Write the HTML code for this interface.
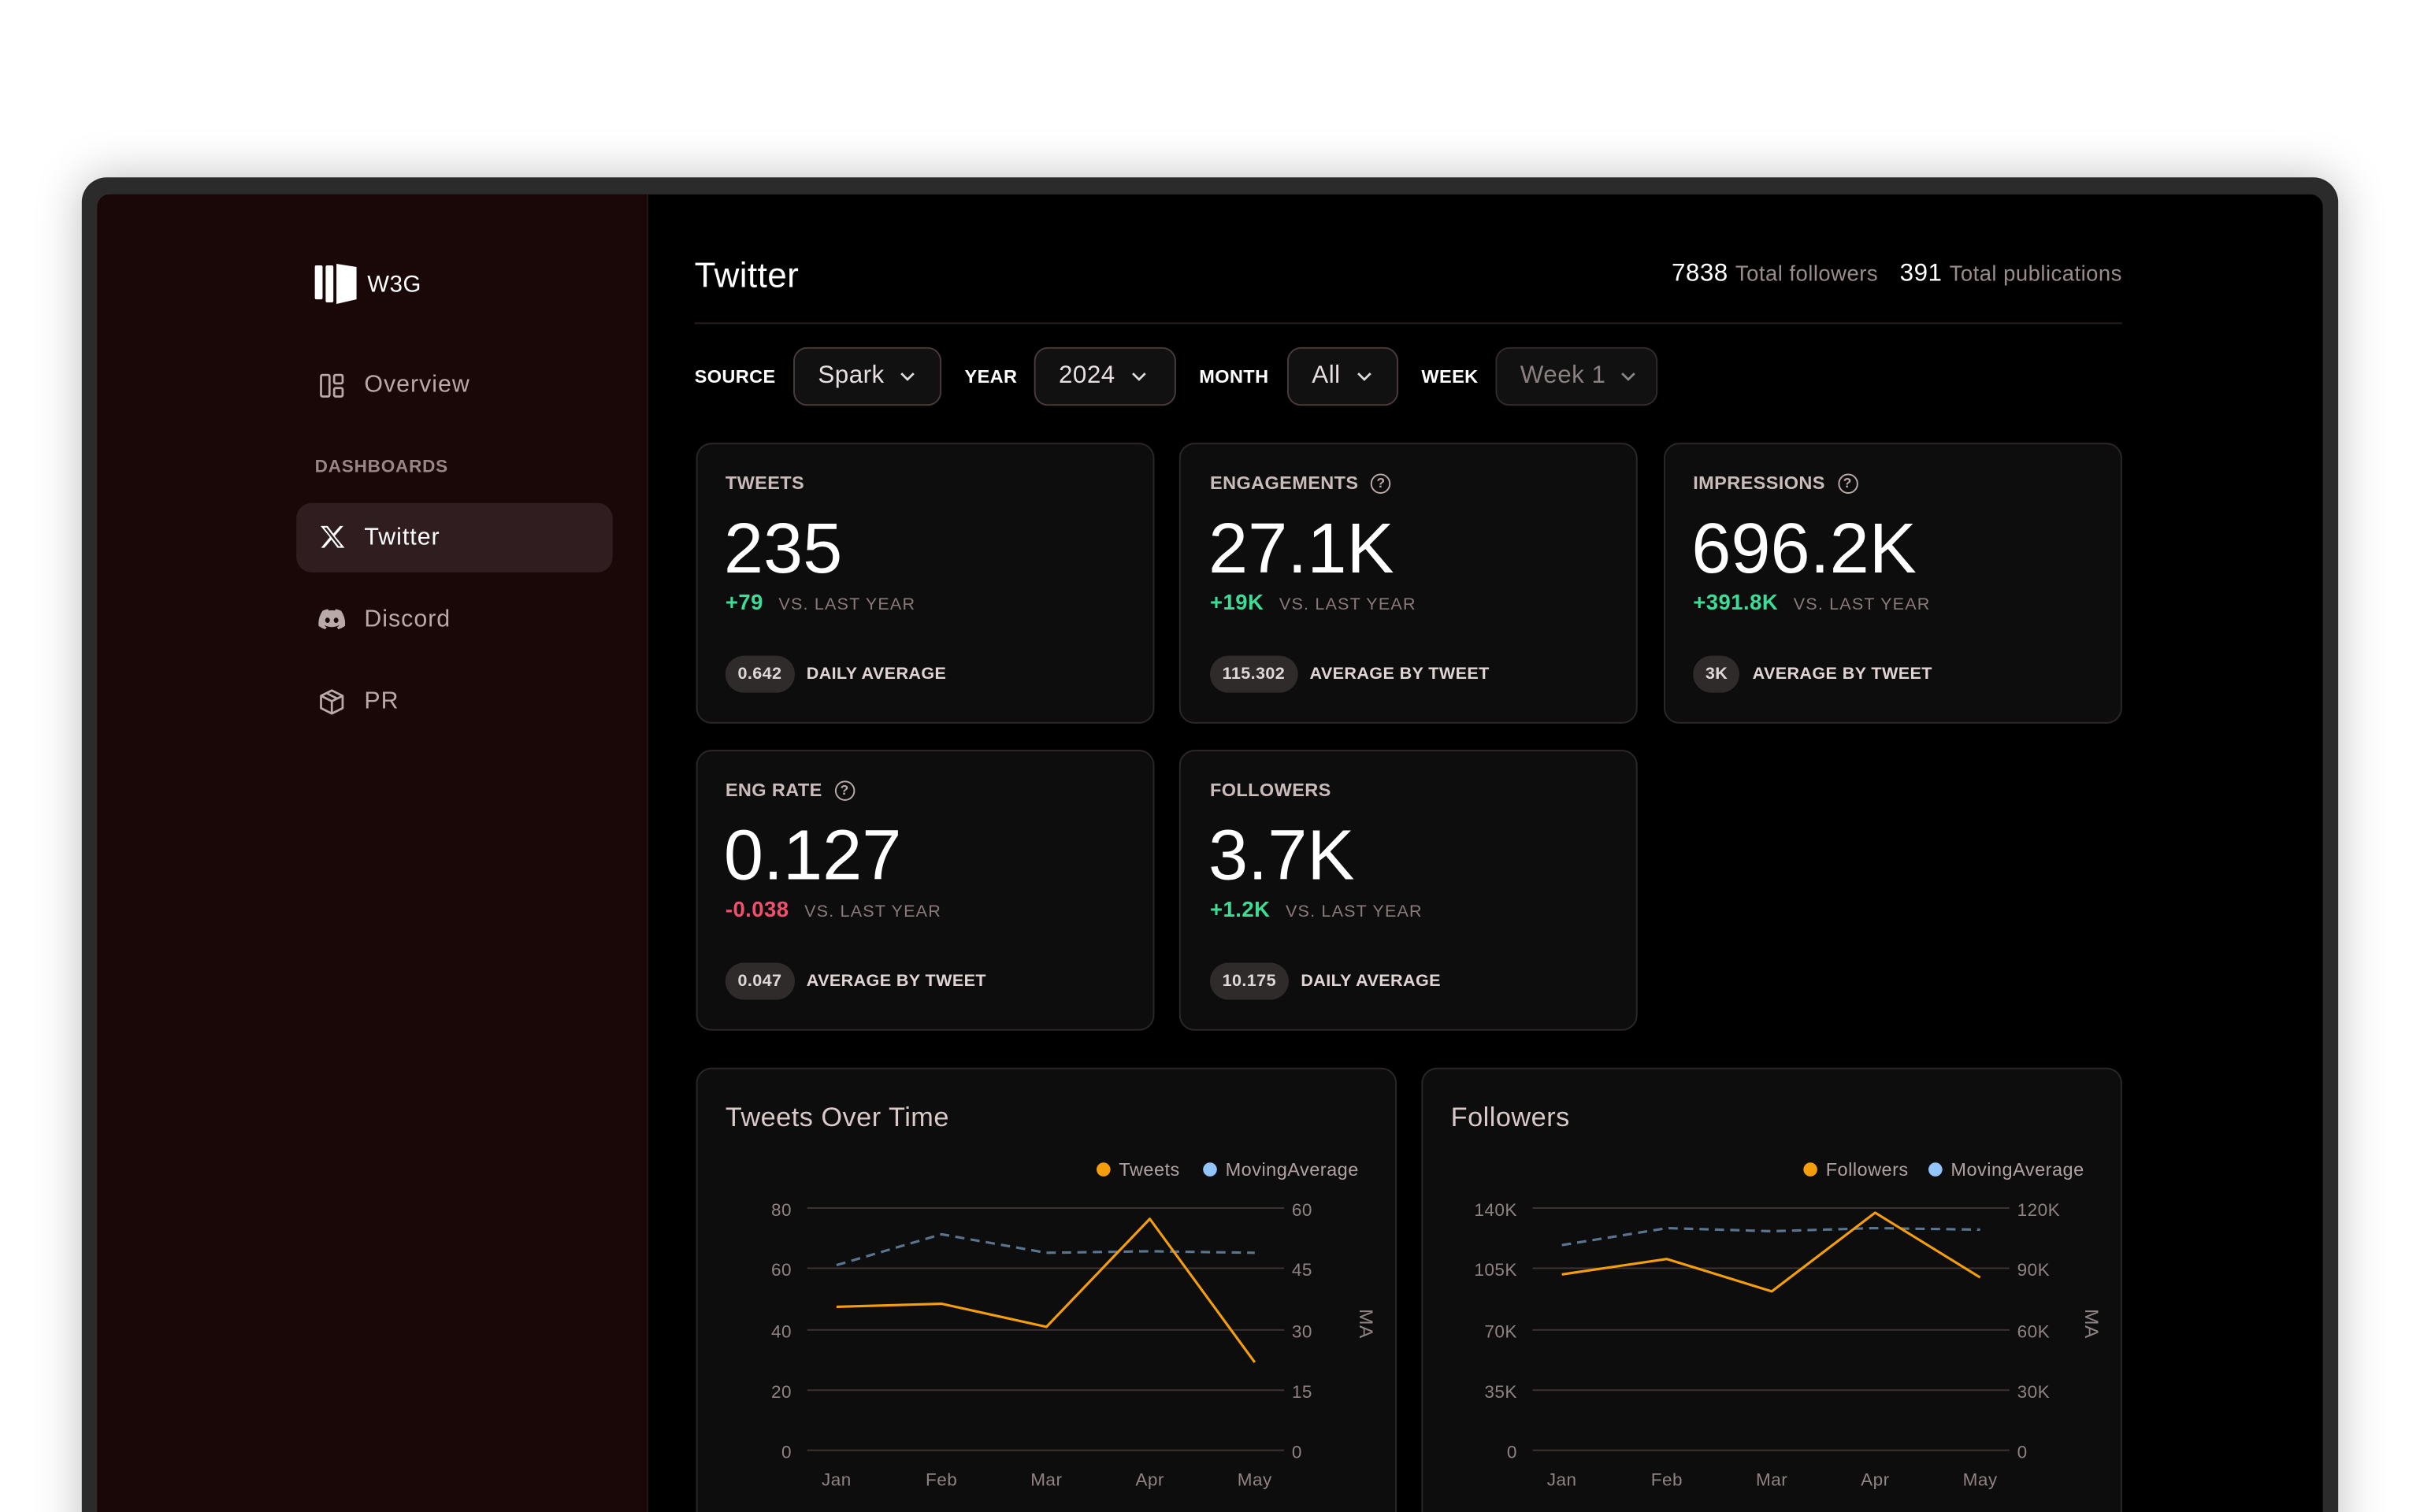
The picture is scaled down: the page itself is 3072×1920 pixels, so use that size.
<!DOCTYPE html>
<html><head><meta charset="utf-8"><style>
*{margin:0;padding:0;box-sizing:border-box}
html,body{width:3072px;height:1920px;overflow:hidden;background:#fff;font-family:"Liberation Sans",sans-serif}
#s{position:absolute;left:0;top:0;width:1568px;height:980px;overflow:hidden;transform:scale(1.959184);transform-origin:0 0;letter-spacing:.25px}
.a{position:absolute}
.frame{left:53px;top:115px;width:1462px;height:900px;background:#2b2b2b;border-radius:16px;box-shadow:0 0 30px rgba(0,0,0,.25)}
.screen{left:63px;top:126px;width:1442px;height:900px;background:#000;border-radius:8px 8px 0 0;overflow:hidden}
.side{left:63px;top:126px;width:357px;height:900px;background:#1a0707;border-right:1px solid #2a1818;border-radius:8px 0 0 0}
.nav{font-size:15.5px;color:#b9a9a9;letter-spacing:.5px}
.lbl{font-size:12px;font-weight:bold;color:#fff;letter-spacing:.2px}
.box{height:38px;top:225px;background:#111;border:1px solid #4a3b3b;border-radius:9px;color:#e8e0e0;font-size:16px;display:flex;align-items:center;padding-left:15px}
.box svg{margin-left:10px}
.card{background:#0e0d0d;border:1px solid #2c2727;border-radius:10px}
.ct{font-size:12px;color:#cbbcbc;font-weight:bold;letter-spacing:.2px;display:flex;align-items:center;gap:8px}
.big{font-size:46px;color:#fff;letter-spacing:0}
.chg{font-size:14px;font-weight:bold;display:flex;align-items:baseline;gap:10px}
.chg span{font-size:11px;color:#8a7b7b;font-weight:normal;letter-spacing:.6px}
.pill{display:flex;align-items:center;gap:8px;font-size:11px;color:#e0d4d4;font-weight:bold;letter-spacing:.2px}
.pill b{background:#2f2b2b;border-radius:12px;padding:6px 8px;color:#e0d8d8}
.q{width:13px;height:13px;border:1.3px solid #b9aaaa;border-radius:50%;font-size:9px;display:inline-flex;align-items:center;justify-content:center;color:#b9aaaa}
</style></head><body><div id="s">
<div class="a frame"></div>
<div class="a screen"></div>
<div class="a side"></div>
<svg class="a" style="left:203px;top:170px" width="30" height="28" viewBox="0 0 30 28"><rect x="1" y="2" width="5" height="22" rx="1" fill="#fff"/><rect x="8" y="2" width="5" height="24" rx="1" fill="#fff"/><path d="M15 1 L28 3 V24 L15 27 Z" fill="#fff"/></svg>
<div class="a" style="left:238px;top:176px;font-size:15px;color:#fff;letter-spacing:.3px">W3G</div>
<svg class="a" style="left:207px;top:242px" width="16" height="16" viewBox="0 0 16 16" fill="none" stroke="#b9a9a9" stroke-width="1.4"><rect x="1" y="1" width="5.5" height="14" rx="1"/><rect x="9.5" y="1" width="5.5" height="5.5" rx="1"/><rect x="9.5" y="9.5" width="5.5" height="5.5" rx="1"/></svg>
<div class="a nav" style="left:236px;top:241px">Overview</div>
<div class="a" style="left:204px;top:297px;font-size:11.5px;font-weight:bold;color:#9a8686;letter-spacing:.4px">DASHBOARDS</div>
<div class="a" style="left:192px;top:326px;width:205px;height:45px;background:#2f1d1f;border-radius:10px"></div>
<svg class="a" style="left:207px;top:340px" width="17" height="16" viewBox="0 0 24 22"><path d="M1 1h6.5l5.2 7L18.8 1h3L14 10.2 23 21h-6.5l-5.6-7.5L4.5 21h-3l8-9.8Z M4.2 2.5 17.5 19.5h2.2L6.5 2.5Z" fill="#fff" fill-rule="evenodd"/></svg>
<div class="a nav" style="left:236px;top:340px;color:#fff">Twitter</div>
<svg class="a" style="left:206px;top:394px" width="18" height="15" viewBox="0 0 24 19"><path d="M20 2A19 19 0 0 0 15.3.6l-.6 1.2a18 18 0 0 0-5.4 0L8.7.6A19 19 0 0 0 4 2C1 6.5.2 10.8.6 15.1a19 19 0 0 0 5.8 2.9l1.2-2a12 12 0 0 1-1.9-.9l.5-.4a13.5 13.5 0 0 0 11.6 0l.5.4c-.6.4-1.2.7-1.9.9l1.2 2a19 19 0 0 0 5.8-2.9C23.9 10.1 22.6 5.8 20 2ZM8.3 12.5c-1.1 0-2-1-2-2.3s.9-2.3 2-2.3 2 1 2 2.3-.9 2.3-2 2.3Zm7.4 0c-1.1 0-2-1-2-2.3s.9-2.3 2-2.3 2 1 2 2.3-.9 2.3-2 2.3Z" fill="#b9a9a9"/></svg>
<div class="a nav" style="left:236px;top:393px">Discord</div>
<svg class="a" style="left:206px;top:446px" width="18" height="18" viewBox="0 0 18 18" fill="none" stroke="#b9a9a9" stroke-width="1.4" stroke-linejoin="round"><path d="M9 1.5 16 5v8l-7 3.5L2 13V5Z M2 5l7 3.5L16 5 M9 8.5v8 M5.5 3.2l7 3.6"/></svg>
<div class="a nav" style="left:236px;top:446px">PR</div>

<div class="a" style="left:450px;top:166px;font-size:22.5px;color:#fff;letter-spacing:.2px">Twitter</div>
<div class="a" style="right:193px;top:169px;font-size:16px;color:#fff;white-space:nowrap">7838 <span style="font-size:14px;color:#9a8c8c">Total followers</span>&nbsp;&nbsp;&nbsp;391 <span style="font-size:14px;color:#9a8c8c">Total publications</span></div>
<div class="a" style="left:450px;top:209px;width:925px;height:1px;background:#2a1f1f"></div>

<div class="a lbl" style="left:450px;top:237px">SOURCE</div>
<div class="a box" style="left:514px;width:96px">Spark<svg width="10" height="6" viewBox="0 0 10 6"><path d="M1 1l4 4 4-4" stroke="#ddd" stroke-width="1.4" fill="none"/></svg></div>
<div class="a lbl" style="left:625px;top:237px">YEAR</div>
<div class="a box" style="left:670px;width:92px">2024<svg width="10" height="6" viewBox="0 0 10 6"><path d="M1 1l4 4 4-4" stroke="#ddd" stroke-width="1.4" fill="none"/></svg></div>
<div class="a lbl" style="left:777px;top:237px">MONTH</div>
<div class="a box" style="left:834px;width:72px">All<svg width="10" height="6" viewBox="0 0 10 6"><path d="M1 1l4 4 4-4" stroke="#ddd" stroke-width="1.4" fill="none"/></svg></div>
<div class="a lbl" style="left:921px;top:237px">WEEK</div>
<div class="a box" style="left:969px;width:105px;color:#8a8080;border-color:#332a2a">Week 1<svg width="10" height="6" viewBox="0 0 10 6"><path d="M1 1l4 4 4-4" stroke="#888" stroke-width="1.4" fill="none"/></svg></div>

<div class="a card" style="left:451px;top:287px;width:297px;height:182px"></div>
<div class="a card" style="left:764px;top:287px;width:297px;height:182px"></div>
<div class="a card" style="left:1078px;top:287px;width:297px;height:182px"></div>
<div class="a card" style="left:451px;top:486px;width:297px;height:182px"></div>
<div class="a card" style="left:764px;top:486px;width:297px;height:182px"></div>

<div class="a ct" style="left:470px;top:306px">TWEETS</div>
<div class="a big" style="left:469px;top:328px">235</div>
<div class="a chg" style="left:470px;top:382px;color:#3ddc97">+79<span>VS. LAST YEAR</span></div>
<div class="a pill" style="left:470px;top:425px"><b>0.642</b>DAILY AVERAGE</div>

<div class="a ct" style="left:784px;top:306px">ENGAGEMENTS<span class="q">?</span></div>
<div class="a big" style="left:783px;top:328px">27.1K</div>
<div class="a chg" style="left:784px;top:382px;color:#3ddc97">+19K<span>VS. LAST YEAR</span></div>
<div class="a pill" style="left:784px;top:425px"><b>115.302</b>AVERAGE BY TWEET</div>

<div class="a ct" style="left:1097px;top:306px">IMPRESSIONS<span class="q">?</span></div>
<div class="a big" style="left:1096px;top:328px">696.2K</div>
<div class="a chg" style="left:1097px;top:382px;color:#3ddc97">+391.8K<span>VS. LAST YEAR</span></div>
<div class="a pill" style="left:1097px;top:425px"><b>3K</b>AVERAGE BY TWEET</div>

<div class="a ct" style="left:470px;top:505px">ENG RATE<span class="q">?</span></div>
<div class="a big" style="left:469px;top:527px">0.127</div>
<div class="a chg" style="left:470px;top:581px;color:#f0506e">-0.038<span>VS. LAST YEAR</span></div>
<div class="a pill" style="left:470px;top:624px"><b>0.047</b>AVERAGE BY TWEET</div>

<div class="a ct" style="left:784px;top:505px">FOLLOWERS</div>
<div class="a big" style="left:783px;top:527px">3.7K</div>
<div class="a chg" style="left:784px;top:581px;color:#3ddc97">+1.2K<span>VS. LAST YEAR</span></div>
<div class="a pill" style="left:784px;top:624px"><b>10.175</b>DAILY AVERAGE</div>

<div class="a card" style="left:451px;top:692px;width:454px;height:320px"></div>
<div class="a card" style="left:921px;top:692px;width:454px;height:320px"></div>
<div class="a" style="left:470px;top:714px;font-size:17.5px;color:#d9c9c9">Tweets Over Time</div>
<div class="a" style="left:940px;top:714px;font-size:17.5px;color:#d9c9c9">Followers</div>

<svg class="a" style="left:0;top:0" width="1568" height="980" font-family="Liberation Sans, sans-serif" font-size="11.5" fill="#8f8282">
<g stroke="#3d3333" stroke-width="1">
<line x1="523" y1="783" x2="832" y2="783"/><line x1="523" y1="822" x2="832" y2="822"/><line x1="523" y1="862" x2="832" y2="862"/><line x1="523" y1="901" x2="832" y2="901"/><line x1="523" y1="940" x2="832" y2="940"/>
<line x1="993" y1="783" x2="1302" y2="783"/><line x1="993" y1="822" x2="1302" y2="822"/><line x1="993" y1="862" x2="1302" y2="862"/><line x1="993" y1="901" x2="1302" y2="901"/><line x1="993" y1="940" x2="1302" y2="940"/>
</g>
<g text-anchor="end"><text x="513" y="788">80</text><text x="513" y="827">60</text><text x="513" y="867">40</text><text x="513" y="906">20</text><text x="513" y="945">0</text>
<text x="983" y="788">140K</text><text x="983" y="827">105K</text><text x="983" y="867">70K</text><text x="983" y="906">35K</text><text x="983" y="945">0</text></g>
<g><text x="837" y="788">60</text><text x="837" y="827">45</text><text x="837" y="867">30</text><text x="837" y="906">15</text><text x="837" y="945">0</text>
<text x="1307" y="788">120K</text><text x="1307" y="827">90K</text><text x="1307" y="867">60K</text><text x="1307" y="906">30K</text><text x="1307" y="945">0</text></g>
<g text-anchor="middle"><text x="542" y="963">Jan</text><text x="610" y="963">Feb</text><text x="678" y="963">Mar</text><text x="745" y="963">Apr</text><text x="813" y="963">May</text>
<text x="1012" y="963">Jan</text><text x="1080" y="963">Feb</text><text x="1148" y="963">Mar</text><text x="1215" y="963">Apr</text><text x="1283" y="963">May</text></g>
<text x="877" y="862" text-anchor="middle" transform="rotate(90 881 862)" font-size="12.5">MA</text>
<text x="1347" y="862" text-anchor="middle" transform="rotate(90 1351 862)" font-size="12.5">MA</text>
<circle cx="715" cy="758" r="4.5" fill="#f59e0b"/><text x="725" y="762" fill="#b0a2a2" font-size="12">Tweets</text>
<circle cx="784" cy="758" r="4.5" fill="#93c5fd"/><text x="794" y="762" fill="#b0a2a2" font-size="12">MovingAverage</text>
<circle cx="1173" cy="758" r="4.5" fill="#f59e0b"/><text x="1183" y="762" fill="#b0a2a2" font-size="12">Followers</text>
<circle cx="1254" cy="758" r="4.5" fill="#93c5fd"/><text x="1264" y="762" fill="#b0a2a2" font-size="12">MovingAverage</text>
<g fill="none" stroke-width="1.6" stroke-linejoin="round">
<polyline points="542,820 610,800 678,812 745,811 813,812" stroke="#5a7590" stroke-dasharray="6,4"/>
<polyline points="542,847 610,845 678,860 745,790 813,883" stroke="#f59e0b"/>
<polyline points="1012,807 1080,796 1148,798 1215,796 1283,797" stroke="#5a7590" stroke-dasharray="6,4"/>
<polyline points="1012,826 1080,816 1148,837 1215,786 1283,828" stroke="#f59e0b"/>
</g>
</svg>
</div></body></html>
